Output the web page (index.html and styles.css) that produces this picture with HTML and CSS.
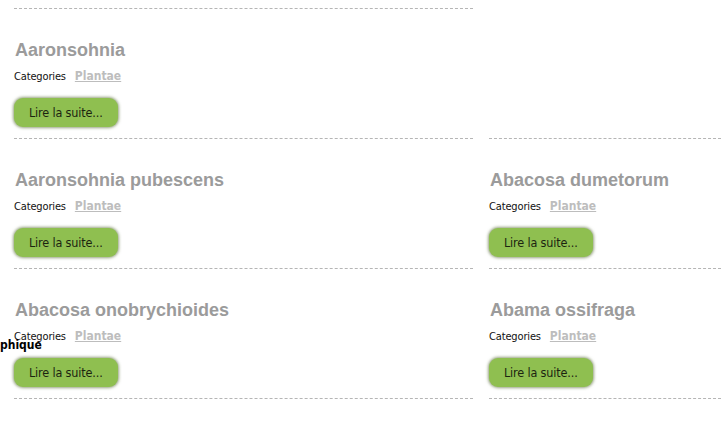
FILE: index.html
```html
<!DOCTYPE html>
<html lang="fr">
<head>
<meta charset="utf-8">
<title>Plantae</title>
<link rel="stylesheet" href="styles.css">
</head>
<body>
<div class="grid">
  <div class="stub"></div>
  <div class="empty"></div>

  <div class="item">
    <h2 class="title">Aaronsohnia</h2>
    <div class="cats">Categories <a href="#" class="cat">Plantae</a></div>
    <a href="#" class="more">Lire la suite...</a>
  </div>
  <div class="item blank"></div>

  <div class="item">
    <h2 class="title">Aaronsohnia pubescens</h2>
    <div class="cats">Categories <a href="#" class="cat">Plantae</a></div>
    <a href="#" class="more">Lire la suite...</a>
  </div>
  <div class="item">
    <h2 class="title">Abacosa dumetorum</h2>
    <div class="cats">Categories <a href="#" class="cat">Plantae</a></div>
    <a href="#" class="more">Lire la suite...</a>
  </div>

  <div class="item">
    <h2 class="title">Abacosa onobrychioides</h2>
    <div class="cats">Categories <a href="#" class="cat">Plantae</a></div>
    <a href="#" class="more">Lire la suite...</a>
  </div>
  <div class="item">
    <h2 class="title">Abama ossifraga</h2>
    <div class="cats">Categories <a href="#" class="cat">Plantae</a></div>
    <a href="#" class="more">Lire la suite...</a>
  </div>
</div>
<div class="stray">phique</div>
</body>
</html>
```

FILE: styles.css
```css
html, body {
  margin: 0;
  padding: 0;
  background: #ffffff;
}
body {
  font-family: "Liberation Sans", Arial, sans-serif;
  position: relative;
  width: 721px;
  height: 425px;
  overflow: hidden;
}
.grid {
  display: grid;
  grid-template-columns: 459px 232px;
  column-gap: 16px;
  padding-left: 14px;
}
.stub {
  height: 8px;
  border-bottom: 1px dashed #b5b5b5;
}
.empty {
  height: 9px;
}
.item {
  height: 129px;
  border-bottom: 1px dashed #b5b5b5;
  display: flex;
  flex-direction: column;
  align-items: flex-start;
}
.title {
  margin: 30px 0 0 1px;
  font-family: "Liberation Sans", Arial, sans-serif;
  font-size: 18px;
  line-height: 22px;
  font-weight: bold;
  color: #9b9b9b;
}
.cats {
  margin-top: 8px;
  font-family: "DejaVu Sans Condensed", "DejaVu Sans", sans-serif;
  font-size: 11px;
  line-height: 14px;
  color: #111;
  letter-spacing: -0.15px;
}
.cat {
  margin-left: 6px;
  font-weight: bold;
  font-size: 12px;
  color: #bdbdbd;
  text-decoration: underline;
  letter-spacing: 0;
}
.more {
  margin-top: 14px;
  display: block;
  width: 104px;
  height: 29px;
  box-sizing: border-box;
  padding-left: 15px;
  border-radius: 9px;
  background: #8fbf50;
  box-shadow: 0 0 3px 1px rgba(80, 100, 45, 0.6);
  font-family: "DejaVu Sans Condensed", "DejaVu Sans", sans-serif;
  font-size: 12.5px;
  line-height: 29px;
  color: #1c2410;
  text-decoration: none;
  letter-spacing: -0.15px;
}
.stray {
  position: absolute;
  left: 0;
  top: 338px;
  font-family: "DejaVu Sans Condensed", "DejaVu Sans", sans-serif;
  font-weight: bold;
  font-size: 12px;
  line-height: 14px;
  color: #000;
}
```
